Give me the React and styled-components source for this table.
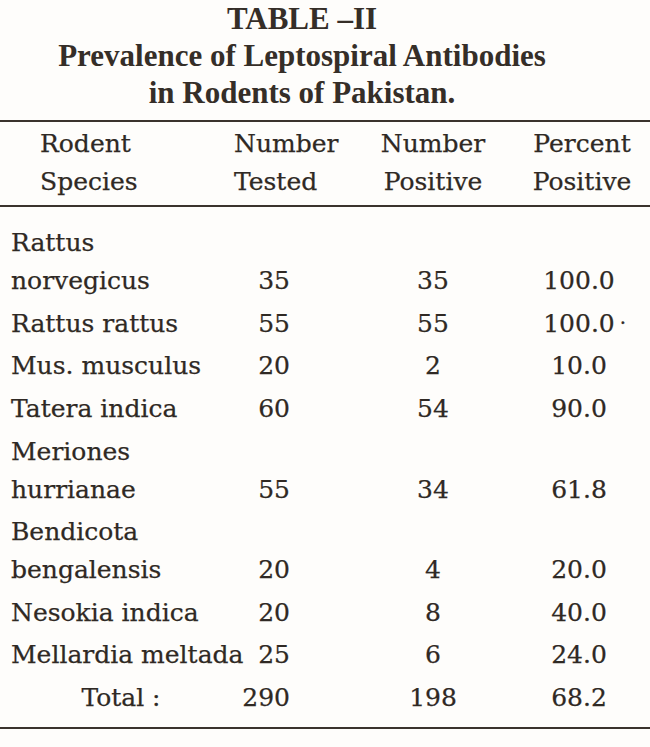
import styled, { createGlobalStyle } from "styled-components";

const Global = createGlobalStyle`
  html, body {
    margin: 0;
    padding: 0;
    background: #fefdfb;
  }
`;

const Pagina = styled.div`
  width: 650px;
  height: 747px;
  background: #fefdfb;
  color: #2f2924;
  font-family: "DejaVu Serif", "Liberation Serif", serif;
  overflow: hidden;
`;

const Titulo = styled.div`
  font-family: "Liberation Serif", serif;
  font-weight: bold;
  font-size: 31px;
  line-height: 37px;
  text-align: center;
  padding: 0 46px 0 0;
  height: 120px;
  color: #352e28;

  h2 {
    margin: 0;
    font-size: inherit;
  }
`;

const Tabla = styled.div`
  border-top: 2px solid #3a332d;
  border-bottom: 2px solid #3a332d;
  padding: 3px 0 8px;
`;

const Fila = styled.div`
  display: grid;
  grid-template-columns: 234px 80px 186px 1fr;
  font-size: 25px;
  line-height: 38px;
  -webkit-text-stroke: 0.25px currentColor;
  padding: 2.3px 0;
`;

const Cabecera = styled(Fila)`
  padding: 0 0 4px;
  border-bottom: 2px solid #3a332d;
  margin-bottom: 15px;
`;

const Celda = styled.div`
  text-align: ${(props) => props.$align || "center"};
  padding-left: ${(props) => props.$left || 0}px;
  padding-right: ${(props) => props.$right || 0}px;
  white-space: nowrap;
`;

const Marca = styled.span`
  position: absolute;
  top: -5px;
  left: 100%;
  margin-left: 5px;
  font-size: 20px;
`;

const Cifra = styled.span`
  position: relative;
`;

const datos = [
  { especie: ["Rattus", "norvegicus"], probados: 35, positivos: 35, pct: "100.0" },
  { especie: ["Rattus rattus"], probados: 55, positivos: 55, pct: "100.0", marca: true },
  { especie: ["Mus. musculus"], probados: 20, positivos: 2, pct: "10.0" },
  { especie: ["Tatera indica"], probados: 60, positivos: 54, pct: "90.0" },
  { especie: ["Meriones", "hurrianae"], probados: 55, positivos: 34, pct: "61.8" },
  { especie: ["Bendicota", "bengalensis"], probados: 20, positivos: 4, pct: "20.0" },
  { especie: ["Nesokia indica"], probados: 20, positivos: 8, pct: "40.0" },
  { especie: ["Mellardia meltada"], probados: 25, positivos: 6, pct: "24.0" },
];

function Valores({ item }) {
  const vacias = item.especie.length - 1;
  const hueco = Array.from({ length: vacias }, (_, i) => <br key={i} />);
  return (
    <>
      <Celda $align="left" $left={11}>
        {item.especie.map((linea, i) => (
          <div key={i}>{linea}</div>
        ))}
      </Celda>
      <Celda $align="right" $right={24}>{hueco}{item.probados}</Celda>
      <Celda $left={52}>{hueco}{item.positivos}</Celda>
      <Celda $left={8}>
        {hueco}
        <Cifra>
          {item.pct}
          {item.marca && <Marca>·</Marca>}
        </Cifra>
      </Celda>
    </>
  );
}

export default function App() {
  return (
    <>
      <Global />
      <Pagina>
        <Titulo>
          <h2>TABLE –II</h2>
          <h2>Prevalence of Leptospiral Antibodies</h2>
          <h2>in Rodents of Pakistan.</h2>
        </Titulo>
        <Tabla>
          <Cabecera>
            <Celda $align="left" $left={40}>Rodent<br />Species</Celda>
            <Celda>Number<br />Tested</Celda>
            <Celda $left={52}>Number<br />Positive</Celda>
            <Celda $left={14}>Percent<br />Positive</Celda>
          </Cabecera>
          {datos.map((item, i) => (
            <Fila key={i}>
              <Valores item={item} />
            </Fila>
          ))}
          <Fila>
            <Celda $left={8}>Total :</Celda>
            <Celda $align="right" $right={24}>290</Celda>
            <Celda $left={52}>198</Celda>
            <Celda $left={8}>68.2</Celda>
          </Fila>
        </Tabla>
      </Pagina>
    </>
  );
}
